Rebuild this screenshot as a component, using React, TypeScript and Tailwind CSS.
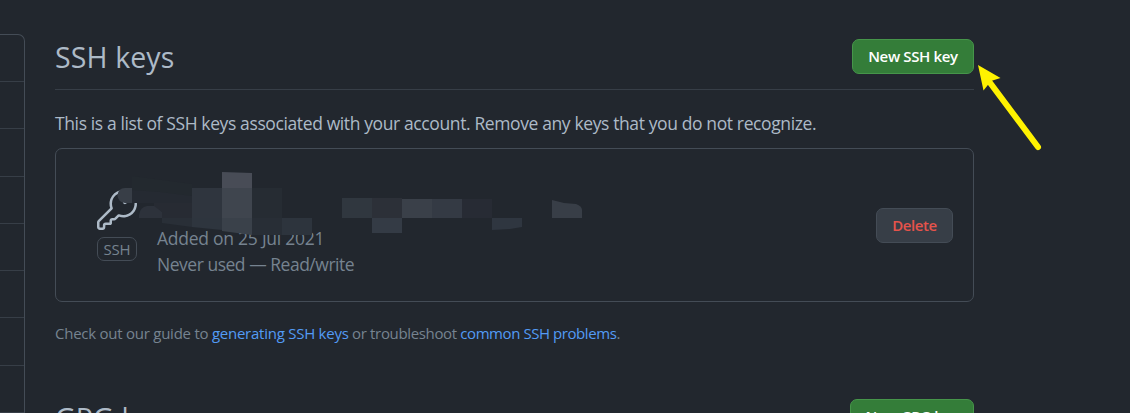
import React from "react";

const KEY_PATH =
  "M16.75 8.5a1.25 1.25 0 1 0 0-2.5 1.25 1.25 0 0 0 0 2.5zM15.75 0a8.25 8.25 0 0 0-7.851 10.79L.513 18.178A1.75 1.75 0 0 0 0 19.414v2.836C0 23.217.784 24 1.75 24h1.5A1.75 1.75 0 0 0 5 22.25v-1a.25.25 0 0 1 .25-.25h2.735a.75.75 0 0 0 .545-.22l.214-.213A.875.875 0 0 0 9 19.948V18.5a.25.25 0 0 1 .25-.25h1.086c.464 0 .91-.184 1.237-.513l1.636-1.636A8.25 8.25 0 1 0 15.75 0zM9 8.25a6.75 6.75 0 1 1 4.288 6.287.75.75 0 0 0-.804.168l-1.971 1.972a.25.25 0 0 1-.177.073H9.25A1.75 1.75 0 0 0 7.5 18.5v1H5.25a1.75 1.75 0 0 0-1.75 1.75v1a.25.25 0 0 1-.25.25h-1.5a.25.25 0 0 1-.25-.25v-2.836a.25.25 0 0 1 .073-.177l7.722-7.721a.75.75 0 0 0 .168-.804A6.73 6.73 0 0 1 9 8.25z";

function Sidebar() {
  return (
    <nav className="mt-[34px] h-[379px] w-[25px] shrink-0 overflow-hidden rounded-tr-[7px] border-t border-r border-[#444c56]">
      {[46, 46, 47, 46, 46, 46, 47, 46].map((h, i) => (
        <div key={i} className="box-content border-b border-[#373e47]" style={{ height: h }} />
      ))}
    </nav>
  );
}

/* Mosaic that hides the key title and fingerprint. */
function Mosaic() {
  return (
    <svg className="absolute top-0 left-0" width="540" height="80" viewBox="85 165 540 80">
      <path d="M132 176L192 184V203H132Z" fill="#23292f" />
      <path d="M132 190L160 192L192 196V203H132Z" fill="#252a32" />
      <path d="M132 188V203H125Q118 202 117.500 195.500Q118 188 125 188Z" fill="#383e47" />
      <path d="M139 218V215Q140 207 147 206H156L162 212V218Z" fill="#2d323b" />
      <path d="M154 203H192V218H162V212L154 206Z" fill="#272b33" />
      <path d="M162 218H192V227L162 223Z" fill="#292f37" />
      <path d="M192 188H222V218H192Z" fill="#2f353e" />
      <path d="M192 218H222V230L192 227Z" fill="#2e353e" />
      <path d="M222 172L252 173V188H222Z" fill="#484c56" />
      <path d="M222 188H252V218H222Z" fill="#3f454e" />
      <path d="M222 218H252V235L222 231Z" fill="#3a414a" />
      <path d="M252 188H282V218H252Z" fill="#262c33" />
      <path d="M252 218H282V235H252Z" fill="#282e36" />
      <path d="M282 218H312V235H282Z" fill="#2d343d" />
      <path d="M342 198H372V218H342Z" fill="#30373f" />
      <path d="M372 198H402V218H372Z" fill="#2c3038" />
      <path d="M402 199H432V218H402Z" fill="#3a4049" />
      <path d="M432 199H462V218H432Z" fill="#343a44" />
      <path d="M462 199H492V218H462Z" fill="#272b34" />
      <path d="M372 218H402V233H372Z" fill="#343b45" />
      <path d="M492 218H522V227L510 229L492 230Z" fill="#2f3640" />
      <path d="M552 200L564 203L576 204Q582 206 582 210V218H552Z" fill="#383e47" />
    </svg>
  );
}

function Arrow() {
  return (
    <svg className="absolute top-[60px] left-[970px]" width="80" height="100" viewBox="970 60 80 100">
      <path d="M988 80L1038 147" stroke="#fff200" strokeWidth="6" strokeLinecap="round" />
      <path d="M978 65L1000.500 78L991 81L983.500 90.500Z" fill="#fff200" />
    </svg>
  );
}

export default function App() {
  return (
    <div className="relative flex h-[413px] w-[1130px] overflow-hidden bg-[#22272e] font-['Open_Sans',sans-serif] text-[#adbac7]">
      <Sidebar />
      <main className="ml-[30px] w-[919px]">
        <header className="flex h-[90px] items-start justify-between border-b border-[#373e47] pt-[39px]">
          <h2 className="text-[28.5px] leading-[37px] tracking-[0.12px] whitespace-nowrap">SSH keys</h2>
          <button className="h-[35px] w-[122px] rounded-[7px] border border-[#46954a] bg-[#347d39] text-[15px] font-semibold tracking-[-0.35px] whitespace-nowrap text-white">
            New SSH key
          </button>
        </header>
        <p className="mt-[19px] h-[29px] text-[17.5px] leading-[28px] tracking-[-0.385px] whitespace-nowrap">
          This is a list of SSH keys associated with your account. Remove any keys that you do not recognize.
        </p>
        <section className="relative mt-[10px] flex h-[154px] rounded-[7px] border border-[#444c56]">
          <div className="mt-[41px] ml-[41px] w-10">
            <svg width="40" height="40" viewBox="0 0 24 24" fill="#adbac7">
              <path d={KEY_PATH} />
            </svg>
            <div className="mt-[7px] flex h-6 w-10 items-center justify-center rounded-[7px] border border-[#444c56] text-[15px] tracking-[-0.2px] text-[#768390]">
              SSH
            </div>
          </div>
          <div className="mt-[76px] ml-5 text-[17.5px] leading-[26px] whitespace-nowrap text-[#768390]">
            <div className="tracking-[-0.25px]">Added on 25 Jul 2021</div>
            <div className="tracking-[-0.48px]">Never used — Read/write</div>
          </div>
          <button className="mt-[59px] mr-5 ml-auto h-[35px] w-[77px] rounded-[7px] border border-[#444c56] bg-[#373e47] text-[15px] font-semibold tracking-[-0.4px] text-[#e5534b]">
            Delete
          </button>
          <div className="absolute top-4 left-[29px]">
            <Mosaic />
          </div>
        </section>
        <p className="mt-[19px] h-[25px] text-[15px] leading-6 whitespace-nowrap text-[#768390]">
          <span className="tracking-[-0.25px]">Check out our guide to </span>
          <a className="tracking-[-0.25px] text-[#539bf5]">generating SSH keys</a>
          <span className="tracking-[-0.35px]"> or troubleshoot </span>
          <a className="tracking-[-0.43px] text-[#539bf5]">common SSH problems</a>.
        </p>
        <header className="mt-[53px] flex items-start justify-between">
          <h2 className="text-[28.5px] leading-[38px] tracking-[0.12px] whitespace-nowrap">GPG keys</h2>
          <button className="h-[35px] w-[124px] rounded-[7px] border border-[#46954a] bg-[#347d39] text-[15px] font-semibold tracking-[-0.35px] whitespace-nowrap text-white">
            New GPG key
          </button>
        </header>
      </main>
      <Arrow />
    </div>
  );
}
